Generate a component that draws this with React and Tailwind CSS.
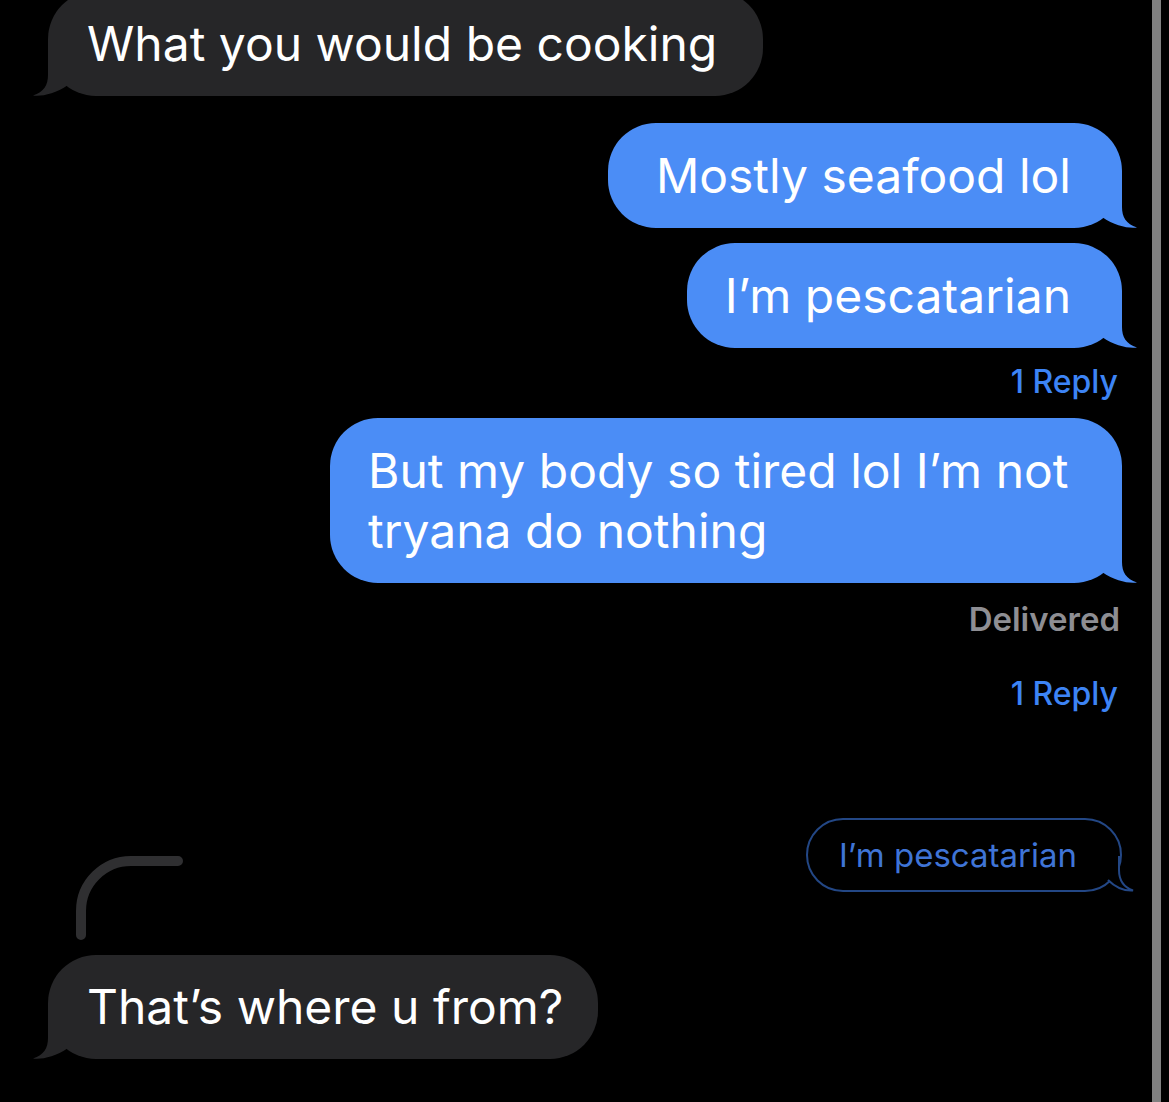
const Tail = ({ color, side }) => (
    <svg
        width="40"
        height="50"
        viewBox="0 0 40 50"
        className={side === 'left' ? 'absolute bottom-0 left-[-15px] -scale-x-100' : 'absolute bottom-0 right-[-15px]'}
    >
        <path d="M0 0H25V29C25 39 29 46 40 49.5C31 50.5 18 48 5 39L0 39Z" fill={color} />
    </svg>
);

const Bubble = ({ side, className, children }) => {
    const isLeft = side === 'left';
    return (
        <div
            className={`relative flex items-center whitespace-nowrap text-white text-[48px] leading-[60px] rounded-[48px] ${
                isLeft ? 'bg-[#262628] ml-[48px] self-start pl-[39px]' : 'bg-[#4b8df6] mr-[30px] self-end'
            } ${className}`}
        >
            {children}
            <Tail color={isLeft ? '#262628' : '#4b8df6'} side={side} />
        </div>
    );
};

const ReplyLink = ({ className }) => (
    <div className={`self-end mr-[34px] h-[36px] leading-[36px] text-[32px] font-medium text-[#3d84f5] ${className}`}>
        1 Reply
    </div>
);

export default function App() {
    return (
        <div className="w-[1169px] h-[1102px] bg-black flex overflow-hidden font-[Inter,sans-serif]">
            <div className="w-[1152px] shrink-0 flex flex-col">
                <Bubble side="left" className="mt-[-9px] w-[715px] h-[105px]">
                    What you would be cooking
                </Bubble>

                <Bubble side="right" className="mt-[27px] w-[514px] h-[105px] justify-end pr-[51px]">
                    Mostly seafood lol
                </Bubble>
                <Bubble side="right" className="mt-[15px] w-[435px] h-[105px] justify-end pr-[51px]">
                    I’m pescatarian
                </Bubble>

                <ReplyLink className="mt-[16px]" />

                <Bubble side="right" className="mt-[18px] w-[792px] h-[165px] pl-[38px]">
                    <span>
                        But my body so tired lol I’m not
                        <br />
                        tryana do nothing
                    </span>
                </Bubble>

                <div className="self-end mr-[32px] mt-[18px] h-[36px] leading-[36px] text-[33px] font-semibold text-[#8e8e93]">
                    Delivered
                </div>

                <ReplyLink className="mt-[39px]" />

                <div className="relative mt-[106px] flex flex-col">
                    {/* thread connector */}
                    <svg width="115" height="90" viewBox="0 0 115 90" className="absolute left-[70px] top-[38px]">
                        <path
                            d="M11 79V55A50 50 0 0 1 61 5H108"
                            fill="none"
                            stroke="#2f2f31"
                            strokeWidth="10"
                            strokeLinecap="round"
                        />
                    </svg>

                    <div className="relative self-end mr-[30px] w-[316px] h-[74px] rounded-full border-2 border-[#234785] flex items-center pl-[31px] text-[33px] leading-[40px] text-[#3f74d6] whitespace-nowrap">
                        I’m pescatarian
                        <svg width="40" height="36" viewBox="0 0 40 36" className="absolute right-[-16px] bottom-[-2px]">
                            <path d="M0 0H23V14C23 24 27 31 37 34.5C29 35 20 32 12 24L0 24Z" fill="#000" />
                            <path
                                d="M23 0V14C23 24 27 31 37 34.5C29 35 20 32 12 24"
                                fill="none"
                                stroke="#234785"
                                strokeWidth="2"
                            />
                        </svg>
                    </div>

                    <Bubble side="left" className="mt-[63px] w-[550px] h-[104px]">
                        That’s where u from?
                    </Bubble>
                </div>
            </div>
            <div className="w-[9px] shrink-0 h-full bg-[#808080]" />
        </div>
    );
}
